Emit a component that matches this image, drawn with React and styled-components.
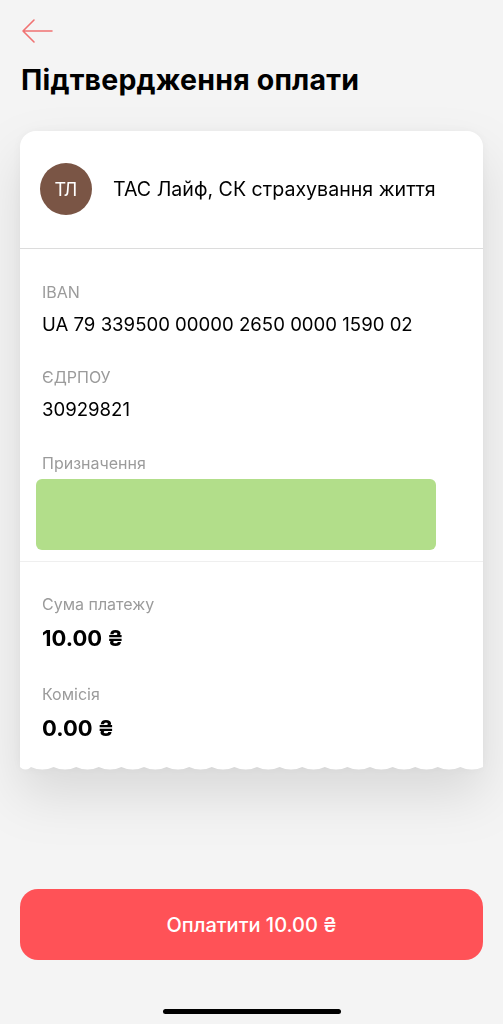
import React from 'react';
import styled, { createGlobalStyle } from 'styled-components';

const GlobalStyle = createGlobalStyle`
  body {
    margin: 0;
    background: #f4f4f4;
    font-family: Inter, "Noto Sans", sans-serif;
    color: #000;
  }
`;

const Page = styled.div`
  min-height: 1024px;
  box-sizing: border-box;
  display: flex;
  flex-direction: column;
  padding: 0 20px;
`;

const BackButton = styled.button`
  align-self: flex-start;
  margin: 18px 0 0 1px;
  padding: 0;
  border: none;
  background: none;
  width: 32px;
  height: 26px;
  display: flex;
  align-items: center;
  cursor: pointer;
`;

const Title = styled.h1`
  margin: 18px 0 0 1px;
  font-size: 28.5px;
  line-height: 36px;
  font-weight: 700;
  letter-spacing: 0.2px;
`;

const CardWrap = styled.div`
  margin-top: 33px;
  filter: drop-shadow(0 0 6px rgba(0, 0, 0, 0.04)) drop-shadow(0 26px 26px rgba(0, 0, 0, 0.11));
`;

const Card = styled.div`
  background: #fff;
  border-radius: 16px 16px 0 0;
`;

const Header = styled.div`
  display: flex;
  align-items: center;
  gap: 21px;
  padding: 32px 20px 33px;
  border-bottom: 1px solid #dcdcdc;
`;

const Avatar = styled.div`
  width: 52px;
  height: 52px;
  border-radius: 50%;
  background: #7a5545;
  color: #fff;
  display: flex;
  align-items: center;
  justify-content: center;
  font-size: 18px;
  letter-spacing: 0.3px;
`;

const Name = styled.div`
  font-size: 19.6px;
  line-height: 24px;
`;

const Section = styled.div`
  padding: ${p => p.$pad};
  display: flex;
  flex-direction: column;
  border-bottom: ${p => (p.$divider ? '1px solid #efefef' : 'none')};
`;

const Label = styled.div`
  font-size: 16px;
  line-height: 20px;
  color: #9b9b9b;
  margin-top: ${p => p.$top || 0}px;
`;

const Value = styled.div`
  margin-top: 11px;
  font-size: ${p => (p.$bold ? 22 : 18.6)}px;
  line-height: ${p => (p.$bold ? 27 : 22)}px;
  font-weight: ${p => (p.$bold ? 700 : 400)};
`;

const Purpose = styled.div`
  margin: 6px 0 0 -6px;
  width: 400px;
  height: 71px;
  border-radius: 6px;
  background: #b2de8a;
`;

const Wave = styled.svg`
  display: block;
  width: 100%;
  height: 8px;
  margin-top: -1px;
`;

const PayButton = styled.button`
  margin-top: auto;
  height: 71px;
  border: none;
  border-radius: 18px;
  background: #ff5257;
  color: #fff;
  font-family: Inter, "Noto Sans", sans-serif;
  font-size: 20px;
  font-weight: 500;
  cursor: pointer;
`;

const HomeIndicator = styled.div`
  align-self: center;
  margin: 49px 0 10px;
  width: 178px;
  height: 5px;
  border-radius: 3px;
  background: #000;
`;

const wavePath = (() => {
  const w = 463;
  const period = 22.6;
  let d = `M0 0 H${w} V4`;
  for (let x = w; x > 0; x -= period) {
    const nx = Math.max(0, x - period);
    const mid = (x + nx) / 2;
    d += ` Q${mid} 9 ${nx} 4`;
  }
  return d + ' Z';
})();

export default function App() {
  return (
    <>
      <GlobalStyle />
      <Page>
        <BackButton aria-label="Назад">
          <svg width="32" height="26" viewBox="0 0 32 26" fill="none">
            <path d="M31 13H2M13 2L2 13l11 11" stroke="#f07272" strokeWidth="1.6" strokeLinecap="round" strokeLinejoin="round" />
          </svg>
        </BackButton>
        <Title>Підтвердження оплати</Title>

        <CardWrap>
          <Card>
            <Header>
              <Avatar>ТЛ</Avatar>
              <Name>ТАС Лайф, СК страхування життя</Name>
            </Header>

            <Section $pad="33px 22px 11px" $divider>
              <Label>IBAN</Label>
              <Value>UA 79 339500 00000 2650 0000 1590 02</Value>
              <Label $top={32}>ЄДРПОУ</Label>
              <Value>30929821</Value>
              <Label $top={33}>Призначення</Label>
              <Purpose />
            </Section>

            <Section $pad="32px 22px 22px">
              <Label>Сума платежу</Label>
              <Value $bold>10.00 ₴</Value>
              <Label $top={32}>Комісія</Label>
              <Value $bold>0.00 ₴</Value>
            </Section>
          </Card>
          <Wave viewBox="0 0 463 8" preserveAspectRatio="none">
            <path d={wavePath} fill="#fff" />
          </Wave>
        </CardWrap>

        <PayButton>Оплатити 10.00 ₴</PayButton>
        <HomeIndicator />
      </Page>
    </>
  );
}
